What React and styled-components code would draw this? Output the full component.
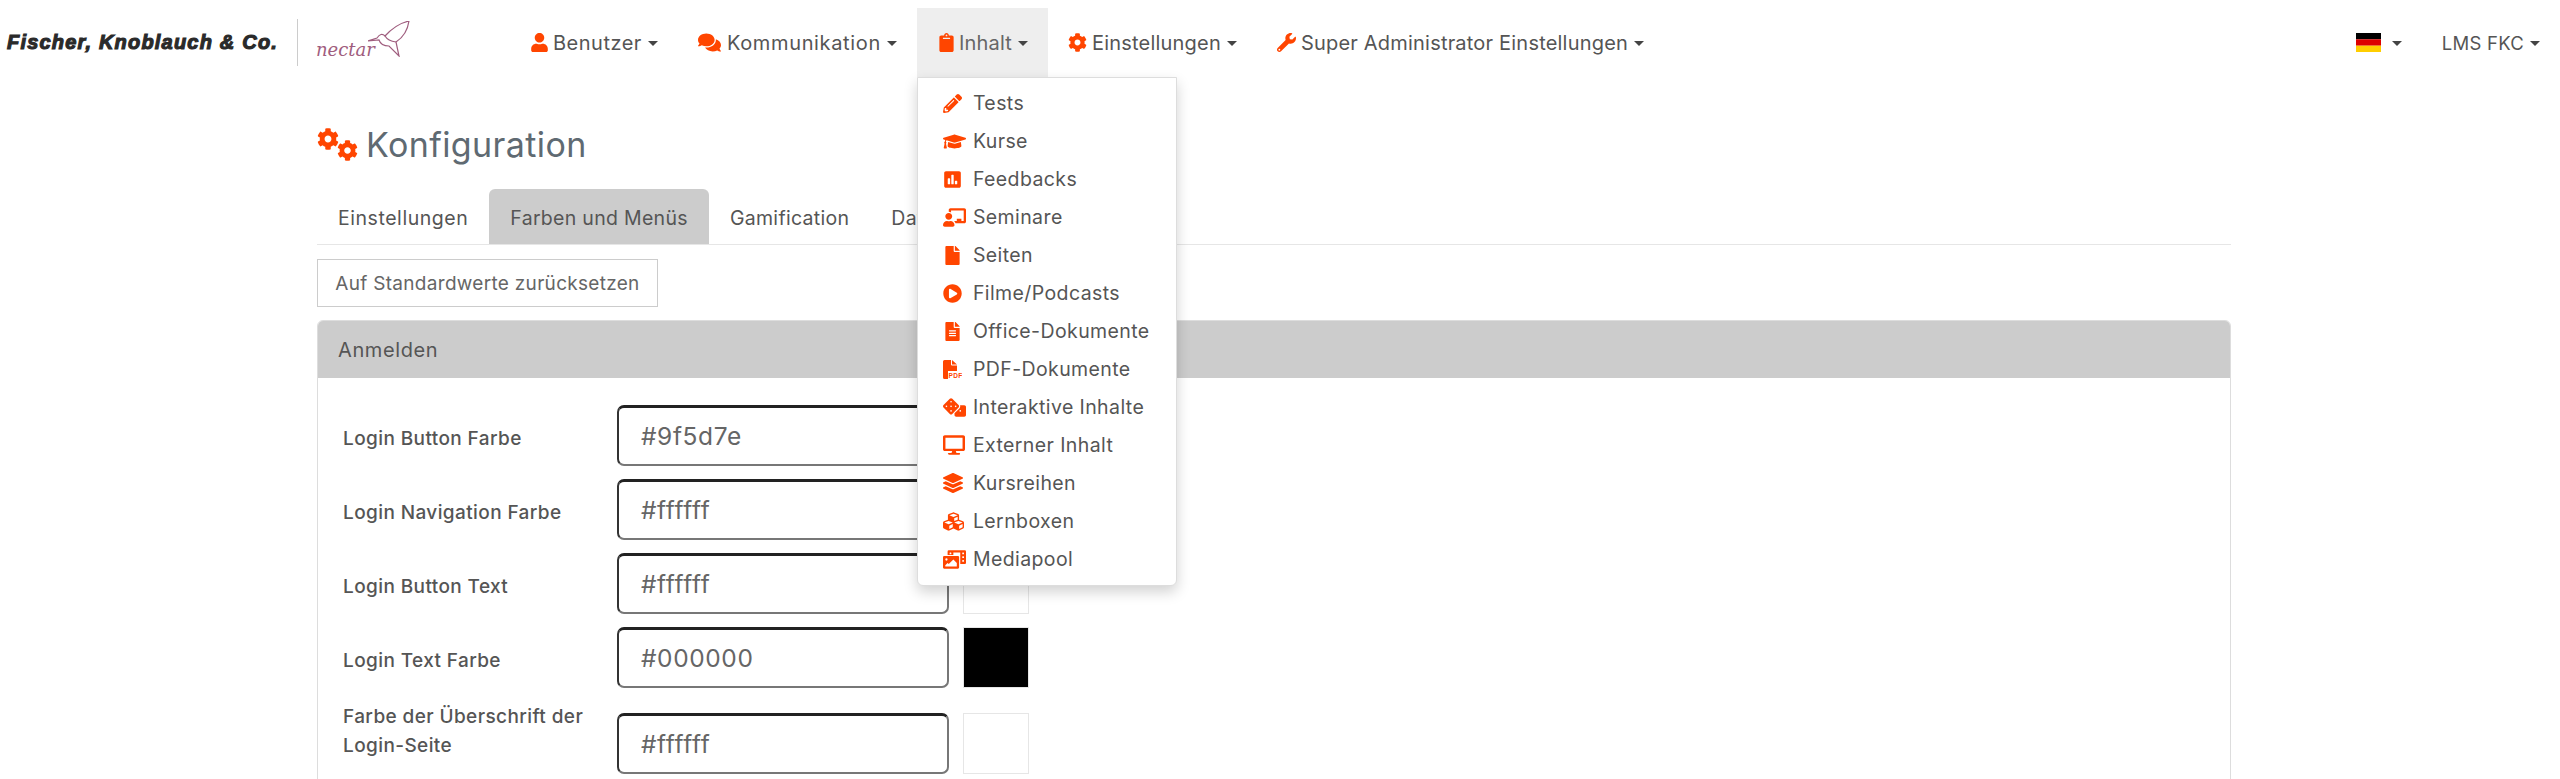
import React from "react";
import styled, { createGlobalStyle } from "styled-components";
import {
  FaUser, FaComments, FaClipboard, FaCog, FaWrench, FaPencilAlt, FaGraduationCap, FaPoll,
  FaChalkboardTeacher, FaFile, FaPlayCircle, FaFileAlt, FaDice, FaDesktop, FaLayerGroup,
  FaCubes, FaPhotoVideo,
} from "react-icons/fa";

const ORANGE = "#ff4500";

const Global = createGlobalStyle`
  html, body { margin: 0; padding: 0; background: #fff; }
  * { box-sizing: border-box; }
  body { font-family: Inter, "Open Sans", sans-serif; color: #555; }
`;

const Page = styled.div`
  height: 779px;
  overflow: hidden;
`;

const Navbar = styled.nav`
  display: flex;
  align-items: flex-end;
  height: 77px;
  position: relative;
  z-index: 5;
`;

const Brand = styled.div`
  width: 510px;
  height: 69px;
  display: flex;
  align-items: center;
  padding-left: 7px;
`;

const Company = styled.span`
  font-family: "Liberation Sans", sans-serif;
  font-weight: 700;
  font-style: italic;
  font-size: 20px;
  color: #2a2a2a;
  -webkit-text-stroke: 1.1px #2a2a2a;
  white-space: nowrap;
  width: 290px;
  letter-spacing: 1.2px;
`;

const BrandLine = styled.div`
  width: 1px;
  height: 47px;
  background: #ccc;
`;

const Nectar = styled.div`
  display: flex;
  align-items: flex-end;
  position: relative;
  margin-left: 18px;
  height: 44px;
  width: 96px;

  span {
    font-family: "DejaVu Serif", serif;
    font-style: italic;
    font-size: 18px;
    color: #9f5d7e;
    line-height: 30px;
  }
  svg {
    position: absolute;
    left: 52px;
    top: 0;
  }
`;

const NavItem = styled.div`
  position: relative;
  display: flex;
  align-items: center;
  height: 69px;
  padding: 0 20px;
  font-size: ${(p) => p.$size || "20px"};
  letter-spacing: ${(p) => p.$spacing || "0.2px"};
  white-space: nowrap;
  background: ${(p) => (p.$active ? "#eee" : "transparent")};
  color: ${(p) => (p.$active ? "#666" : "#555")};

  > svg:first-child {
    color: ${ORANGE};
    margin-right: ${(p) => p.$iconGap || "5px"};
  }
`;

const Caret = styled.i`
  display: inline-block;
  width: 0;
  height: 0;
  margin-left: 6px;
  border-top: 5px solid #444;
  border-left: 5px solid transparent;
  border-right: 5px solid transparent;
  margin-top: 2px;
`;

const RightNav = styled.div`
  margin-left: auto;
  display: flex;
`;

const Dropdown = styled.div`
  position: absolute;
  top: 69px;
  left: 0;
  width: 260px;
  height: 509px;
  padding-top: 6px;
  background: #fff;
  border: 1px solid #ddd;
  border-radius: 0 0 6px 6px;
  box-shadow: 0 6px 14px rgba(0, 0, 0, 0.18);
  z-index: 10;
`;

const MenuItem = styled.div`
  display: flex;
  align-items: center;
  height: 38px;
  padding-left: 25px;
  font-size: 19.5px;
  letter-spacing: 0.4px;
  color: #555;

  span.ic {
    width: 30px;
    display: flex;
    color: ${ORANGE};
  }
`;

const Main = styled.main`
  margin-left: 317px;
  width: 1914px;
`;

const Title = styled.h1`
  display: flex;
  align-items: center;
  height: 112px;
  margin: 0;
  padding-top: 23px;
  font-weight: 400;
  font-size: 34px;
  letter-spacing: 0.4px;
  color: #5f6a72;
`;

const Gears = styled.span`
  display: flex;
  height: 33px;
  margin-right: 8px;
  color: ${ORANGE};

  svg:first-child {
    align-self: flex-start;
  }
  svg:last-child {
    align-self: flex-end;
    margin-left: -2px;
  }
`;

const Tabs = styled.div`
  display: flex;
  height: 56px;
  border-bottom: 1px solid #e6e6e6;
  font-size: 19.5px;
`;

const Tab = styled.div`
  display: flex;
  align-items: center;
  padding: 2px 21px 0;
  border-radius: 6px 6px 0 0;
  letter-spacing: ${(p) => p.$spacing || "0.3px"};
  background: ${(p) => (p.$active ? "#ccc" : "transparent")};
  color: #555;
`;

const ResetButton = styled.button`
  display: block;
  margin-top: 14px;
  width: 341px;
  height: 48px;
  background: #fff;
  border: 1px solid #ccc;
  font: inherit;
  font-size: 19px;
  letter-spacing: 0.3px;
  color: #666;
  padding: 0;
`;

const Panel = styled.section`
  margin-top: 13px;
  border: 1px solid #ddd;
  border-radius: 6px 6px 0 0;
`;

const PanelHead = styled.div`
  display: flex;
  align-items: center;
  height: 57px;
  padding-left: 20px;
  background: #ccc;
  border-radius: 5px 5px 0 0;
  font-size: 20px;
  letter-spacing: 0.6px;
  color: #555;
`;

const PanelBody = styled.div`
  padding: 27px 25px 40px;
`;

const Row = styled.div`
  display: flex;
  align-items: center;
  height: 61px;
  margin-bottom: 13px;
  margin-top: ${(p) => (p.$tall ? "25px" : "0")};
`;

const Label = styled.label`
  width: 274px;
  padding: ${(p) => (p.$tall ? "0 10px 26px 0" : "5px 10px 0 0")};
  font-size: 19px;
  font-weight: 500;
  line-height: 29px;
  letter-spacing: 0.4px;
  color: #555;
`;

const ColorInput = styled.div`
  display: flex;
  align-items: center;
  width: 332px;
  height: 61px;
  padding-left: 22px;
  border: 2px solid #777;
  border-top: 3px solid #222;
  border-left-color: #333;
  border-radius: 7px;
  font-size: 24.5px;
  letter-spacing: 0.6px;
  color: #666;
`;

const Swatch = styled.div`
  width: 66px;
  height: 61px;
  margin-left: 14px;
  border: 1px solid #e6e6e6;
  background: ${(p) => p.$color};
`;

function Flag() {
  return (
    <svg width="25" height="19" viewBox="0 0 25 19">
      <rect width="25" height="6.3" y="0" fill="#000" />
      <rect width="25" height="6.4" y="6.3" fill="#dd0000" />
      <rect width="25" height="6.3" y="12.7" fill="#ffce00" />
    </svg>
  );
}

function Bird() {
  return (
    <svg width="42" height="36" viewBox="0 0 42 36" fill="none" stroke="#9f5d7e" strokeWidth="1.2">
      <path d="M0 20 L9 17 Q13 11 17 15 Q28 3 41 0 Q39 14 28 21 L31 35 L21 25 Q13 25 11 19 Z" />
      <path d="M17 15 Q20 20 28 21" />
    </svg>
  );
}

// the pdf icon from the menu, a page with the label sticking out at the lower right
function PdfIcon() {
  return (
    <svg width="19" height="19" viewBox="0 0 19 19">
      <path d="M0 1.5 Q0 0 1.5 0 H8 V4.5 Q8 5.5 9 5.5 H14 V19 H1.5 Q0 19 0 17.5 Z M9 0 L14 4.5 H9 Z" fill={ORANGE} />
      <rect x="5" y="11" width="14" height="8" fill="#fff" />
      <text x="5.5" y="18" fontFamily="Liberation Sans, sans-serif" fontWeight="700" fontSize="6.5" fill={ORANGE}>PDF</text>
    </svg>
  );
}

const menu = [
  [FaPencilAlt, "Tests", 19],
  [FaGraduationCap, "Kurse", 23],
  [FaPoll, "Feedbacks", 19],
  [FaChalkboardTeacher, "Seminare", 23],
  [FaFile, "Seiten", 19],
  [FaPlayCircle, "Filme/Podcasts", 19],
  [FaFileAlt, "Office-Dokumente", 19],
  [PdfIcon, "PDF-Dokumente", 19],
  [FaDice, "Interaktive Inhalte", 23],
  [FaDesktop, "Externer Inhalt", 22],
  [FaLayerGroup, "Kursreihen", 20],
  [FaCubes, "Lernboxen", 21],
  [FaPhotoVideo, "Mediapool", 23],
];

const rows = [
  ["Login Button Farbe", "#9f5d7e"],
  ["Login Navigation Farbe", "#ffffff"],
  ["Login Button Text", "#ffffff"],
  ["Login Text Farbe", "#000000"],
  ["Farbe der Überschrift der Login-Seite", "#ffffff"],
];

export default function App() {
  return (
    <Page>
      <Global />
      <Navbar>
        <Brand>
          <Company>Fischer, Knoblauch &amp; Co.</Company>
          <BrandLine />
          <Nectar>
            <span>nectar</span>
            <Bird />
          </Nectar>
        </Brand>
        <NavItem $spacing="0.5px" $iconGap="4px"><FaUser size={19} />Benutzer<Caret /></NavItem>
        <NavItem $spacing="0.65px" $iconGap="6px"><FaComments size={23} />Kommunikation<Caret /></NavItem>
        <NavItem $active $iconGap="3px">
          <FaClipboard size={19} />Inhalt<Caret />
          <Dropdown>
            {menu.map(([Icon, text, size]) => (
              <MenuItem key={text}>
                <span className="ic"><Icon size={size} /></span>
                {text}
              </MenuItem>
            ))}
          </Dropdown>
        </NavItem>
        <NavItem><FaCog size={19} />Einstellungen<Caret /></NavItem>
        <NavItem $spacing="0.2px"><FaWrench size={19} />Super Administrator Einstellungen<Caret /></NavItem>
        <RightNav>
          <NavItem><Flag /><Caret /></NavItem>
          <NavItem $size="18.5px" $spacing="0.25px">LMS FKC<Caret /></NavItem>
        </RightNav>
      </Navbar>
      <Main>
        <Title>
          <Gears><FaCog size={22} /><FaCog size={21} /></Gears>
          Konfiguration
        </Title>
        <Tabs>
          <Tab $spacing="0.55px">Einstellungen</Tab>
          <Tab $active>Farben und Menüs</Tab>
          <Tab>Gamification</Tab>
          <Tab>Daten</Tab>
        </Tabs>
        <ResetButton>Auf Standardwerte zurücksetzen</ResetButton>
        <Panel>
          <PanelHead>Anmelden</PanelHead>
          <PanelBody>
            {rows.map(([label, value], i) => (
              <Row key={label} $tall={i === 4}>
                <Label $tall={i === 4}>{label}</Label>
                <ColorInput>{value}</ColorInput>
                <Swatch $color={value} />
              </Row>
            ))}
          </PanelBody>
        </Panel>
      </Main>
    </Page>
  );
}
